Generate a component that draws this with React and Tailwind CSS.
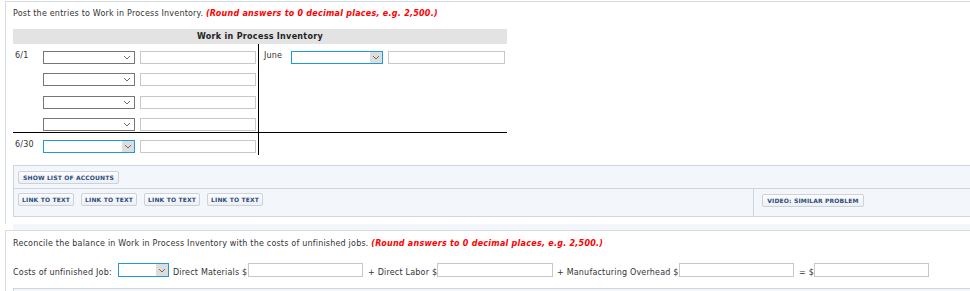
import React from "react";

function Chevron() {
  return (
    <svg width="8" height="5" viewBox="0 0 8 5" className="block">
      <path d="M1 1 L4 4 L7 1" fill="none" stroke="#6b6b6b" strokeWidth="1" />
    </svg>
  );
}

function PlainSelect({ w = "w-[92px]" }) {
  return (
    <div className={`${w} h-[13px] border border-[#767676] bg-white flex items-center justify-end pr-[3px] shrink-0`}>
      <Chevron />
    </div>
  );
}

function FocusSelect({ w = "w-[92px]", h = "h-[13px]" }) {
  return (
    <div className={`${w} ${h} border border-[#1e9ad6] bg-white flex justify-end shrink-0`}>
      <div className="w-[12px] h-full bg-[#dddddd] flex items-center justify-center">
        <Chevron />
      </div>
    </div>
  );
}

function Box({ w = "w-[116px]", h = "h-[13px]" }) {
  return <div className={`${w} ${h} border border-[#c8c8c8] bg-white shrink-0`} />;
}

function EntryRow({ label, focus }) {
  return (
    <div className="flex items-start h-[13px]">
      <div className="w-[30px] pl-[2px] pt-[1px] leading-[8px]">{label}</div>
      {focus ? <FocusSelect /> : <PlainSelect />}
      <div className="ml-[5px]">
        <Box />
      </div>
    </div>
  );
}

function Btn({ w, children }) {
  return (
    <div className={`${w} h-[13px] flex items-center justify-center rounded-[2px] border border-[#cbd2dc] bg-gradient-to-b from-[#fdfdfe] to-[#eceff3] text-[6px] font-bold uppercase leading-none text-[#2b4b7b] tracking-[0.15px] whitespace-nowrap shrink-0`}>
      {children}
    </div>
  );
}

const note = "text-[#ff0000] font-bold italic tracking-[0.25px]";

export default function App() {
  return (
    <div className="w-[970px] h-[291px] overflow-hidden bg-white text-[8px] tracking-[0.2px] text-[#333333] font-['DejaVu_Sans',Verdana,sans-serif]">
      {/* part 1 */}
      <div className="ml-[5px] mt-[1px] w-[975px] border-l border-t border-[#d6dce4] pl-[7px] pt-[7px] pb-[7px]">
        <div className="leading-[10px] whitespace-nowrap">
          Post the entries to Work in Process Inventory.{" "}
          <span className={note}>(Round answers to 0 decimal places, e.g. 2,500.)</span>
        </div>

        <div className="mt-[10px] w-[494px]">
          <div className="h-[15px] bg-[#e3e3e3] text-center font-bold tracking-[0.3px] leading-[15px] text-[#222222]">
            Work in Process Inventory
          </div>
          <div className="flex h-[88px]">
            <div className="w-[245px] pt-[7px] flex flex-col">
              <EntryRow label="6/1" />
              <div className="mt-[9px]">
                <EntryRow label="" />
              </div>
              <div className="mt-[10px]">
                <EntryRow label="" />
              </div>
              <div className="mt-[9px]">
                <EntryRow label="" />
              </div>
            </div>
            <div className="flex-1 border-l border-black pt-[7px] pl-[5px]">
              <div className="flex items-start h-[13px]">
                <div className="w-[27px] pt-[1px] leading-[8px]">June</div>
                <FocusSelect />
                <div className="ml-[5px]">
                  <Box w="w-[117px]" />
                </div>
              </div>
            </div>
          </div>
          <div className="h-px bg-black" />
          <div className="flex">
            <div className="w-[245px] pt-[7px] pb-[2px]">
              <EntryRow label="6/30" focus />
            </div>
            <div className="flex-1 border-l border-black" />
          </div>
        </div>

        <div className="mt-[10px] w-[965px] border border-[#cdd5df] bg-[#f3f6fa]">
          <div className="h-[22px] pl-[4px] pt-[5px] flex items-start">
            <Btn w="w-[101px]">Show List of Accounts</Btn>
          </div>
          <div className="flex h-[28px] border-t border-[#cdd5df]">
            <div className="w-[739px] pl-[4px] pt-[4px] flex items-start gap-[7px]">
              <Btn w="w-[56px]">Link to Text</Btn>
              <Btn w="w-[56px]">Link to Text</Btn>
              <Btn w="w-[56px]">Link to Text</Btn>
              <Btn w="w-[56px]">Link to Text</Btn>
            </div>
            <div className="flex-1 border-l border-[#cdd5df] pl-[8px] pt-[5px] flex items-start">
              <Btn w="w-[102px]">Video: Similar Problem</Btn>
            </div>
          </div>
        </div>
      </div>

      <div className="ml-[13px] h-[6px] bg-[#f3f6fa]" />

      {/* part 2 */}
      <div className="ml-[5px] w-[975px] border-l border-t border-[#d6dce4] pl-[7px] pt-[8px]">
        <div className="leading-[10px] whitespace-nowrap">
          Reconcile the balance in Work in Process Inventory with the costs of unfinished jobs.{" "}
          <span className={note}>(Round answers to 0 decimal places, e.g. 2,500.)</span>
        </div>

        <div className="mt-[14px] h-[14px] flex items-end leading-[8px] whitespace-nowrap">
          <span className="w-[105px]">Costs of unfinished Job:</span>
          <FocusSelect w="w-[51px]" h="h-[14px]" />
          <span className="ml-[4px] w-[75px]">Direct Materials $</span>
          <Box w="w-[115px]" h="h-[14px]" />
          <span className="ml-[5px] w-[69px]">+ Direct Labor $</span>
          <Box w="w-[116px]" h="h-[14px]" />
          <span className="ml-[4px] w-[122px]">+ Manufacturing Overhead $</span>
          <Box w="w-[115px]" h="h-[14px]" />
          <span className="ml-[5px] w-[15px]">= $</span>
          <Box w="w-[115px]" h="h-[14px]" />
        </div>

        <div className="mt-[11px] w-[965px] h-[20px] border border-[#cdd5df] bg-[#f3f6fa]" />
      </div>
    </div>
  );
}
